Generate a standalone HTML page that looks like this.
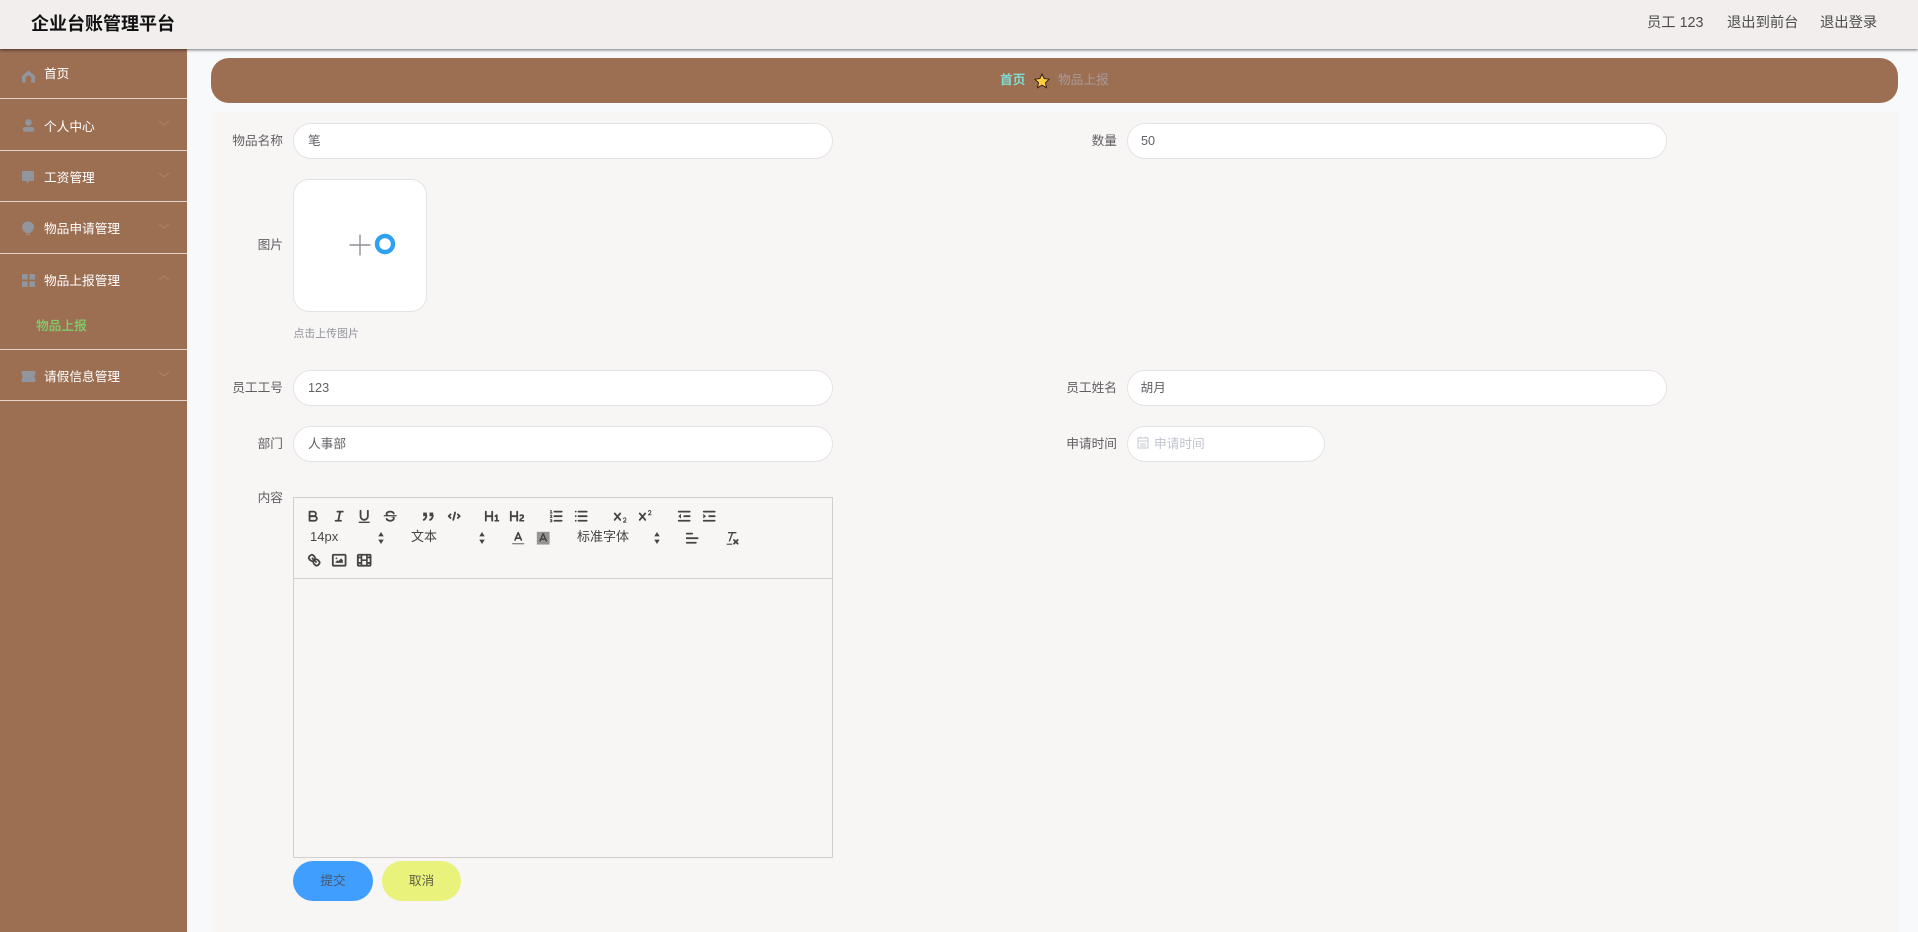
<!DOCTYPE html>
<html lang="zh-CN"><head><meta charset="utf-8"><title>企业台账管理平台</title>
<style>
*{box-sizing:border-box}
html{background:#f8f9fb}
html,body{margin:0;padding:0;width:1918px;height:932px;overflow:hidden;font-family:"Liberation Sans","Noto Sans CJK SC",sans-serif;color:#606266}
body{background:#f8f9fb;filter:blur(.3px)}
.a{position:absolute;white-space:nowrap}
#hd{left:0;top:0;width:1918px;height:49px;background:#f3eeee;box-shadow:0 1px 3px rgba(0,0,0,.55);z-index:3}
#sb{left:0;top:49px;width:187px;height:883px;background:#9c6f53}
.ln{position:absolute;left:0;width:187px;height:1px;background:#e4d3cd}
.mi{font-size:12.7px;line-height:18px;color:#fff;left:44px}
.ic{position:absolute;fill:#8f99a5;opacity:.92}
.ch{position:absolute;left:158px;fill:none;stroke:#fff;stroke-opacity:.14;stroke-width:1}
.lb{font-size:12.7px;line-height:18px;color:#5f5f62;text-align:right;width:70px}
.ip{background:#fff;border:1px solid #e3e2e5;border-radius:18px;height:36px;font-size:12.7px;line-height:34px;padding-left:14px;color:#606266}
.t svg{position:absolute;width:16.4px;height:16.4px;fill:none;stroke:#444;stroke-width:2;stroke-linecap:round;stroke-linejoin:round}
.t svg .f{fill:#444;stroke:none}
.t svg.ar{width:6px;height:12px;stroke:none}
.s{font-size:13px;line-height:16px;color:#444}
</style></head><body>
<div class="a" id="hd">
<div class="a" style="left:31px;top:12px;font-size:18px;line-height:24px;font-weight:700;color:#111">企业台账管理平台</div>
<div class="a" style="left:1647px;top:13px;font-size:14.3px;line-height:20px;color:#4c4c4c">员工 123</div>
<div class="a" style="left:1727px;top:13px;font-size:14.3px;line-height:20px;color:#4c4c4c">退出到前台</div>
<div class="a" style="left:1820px;top:13px;font-size:14.3px;line-height:20px;color:#4c4c4c">退出登录</div>
</div>

<div class="a" id="sb"></div>
<div class="ln" style="top:98px"></div><div class="ln" style="top:150px"></div><div class="ln" style="top:201px"></div><div class="ln" style="top:253px"></div><div class="ln" style="top:349px"></div><div class="ln" style="top:400px"></div>
<div class="a mi" style="top:65px">首页</div>
<div class="a mi" style="top:118px">个人中心</div>
<div class="a mi" style="top:169px">工资管理</div>
<div class="a mi" style="top:220px">物品申请管理</div>
<div class="a mi" style="top:272px">物品上报管理</div>
<div class="a mi" style="top:317px;left:36px;color:#7fd06a;font-weight:500">物品上报</div>
<div class="a mi" style="top:368px">请假信息管理</div>

<svg class="ic" style="left:22px;top:70px" width="13" height="13" viewBox="0 0 14 14"><path d="M7 0.5 L14 6.5 V13.5 H10 V9 A3 3 0 0 0 4 9 V13.5 H0 V6.5Z"/></svg>
<svg class="ic" style="left:22px;top:119px" width="13" height="13" viewBox="0 0 14 14"><circle cx="7" cy="3.8" r="3.6"/><rect x="1" y="8.6" width="12" height="5" rx="2.2"/></svg>
<svg class="ic" style="left:21px;top:170px" width="14" height="14" viewBox="0 0 14 14"><path d="M1 1 H13 V11 H8.5 L6.5 13.5 L5 11 H1Z"/></svg>
<svg class="ic" style="left:21px;top:221px" width="14" height="14" viewBox="0 0 14 14"><path d="M7 0.5 A5.6 5.6 0 0 1 10 11 V12 H4 V11 A5.6 5.6 0 0 1 7 0.5Z"/><rect x="5" y="12.7" width="4" height="1.2"/></svg>
<svg class="ic" style="left:22px;top:274px" width="13" height="13" viewBox="0 0 13 13"><rect x="0" y="0" width="5.6" height="5.6"/><rect x="7.4" y="0" width="5.6" height="5.6"/><rect x="0" y="7.4" width="5.6" height="5.6"/><rect x="7.4" y="7.4" width="5.6" height="5.6"/></svg>
<svg class="ic" style="left:21px;top:371px" width="15" height="11" viewBox="0 0 15 12"><path d="M0 0 H15 V3.500 L13.500 6 L15 8.500 V12 H0 V8.500 L1.500 6 L0 3.500Z"/></svg>

<svg class="ch" style="top:120px" width="12" height="6" viewBox="0 0 12 6"><path d="M1 1 L6 5 L11 1"/></svg>
<svg class="ch" style="top:172px" width="12" height="6" viewBox="0 0 12 6"><path d="M1 1 L6 5 L11 1"/></svg>
<svg class="ch" style="top:223px" width="12" height="6" viewBox="0 0 12 6"><path d="M1 1 L6 5 L11 1"/></svg>
<svg class="ch" style="top:275px" width="12" height="6" viewBox="0 0 12 6"><path d="M1 5 L6 1 L11 5"/></svg>
<svg class="ch" style="top:371px" width="12" height="6" viewBox="0 0 12 6"><path d="M1 1 L6 5 L11 1"/></svg>

<div class="a" style="left:211px;top:58px;width:1687px;height:45px;background:#9c6f53;border-radius:18px"></div>
<div class="a" style="left:1000px;top:71px;font-size:12.7px;line-height:18px;font-weight:700;color:#80dcd2">首页</div>
<svg class="a" style="left:1033.500px;top:72.500px" width="16" height="16" viewBox="0 0 24 24"><path d="M12 1.500 L15.200 8.400 L22.800 9.300 L17.200 14.500 L18.700 22 L12 18.200 L5.300 22 L6.800 14.500 L1.200 9.300 L8.800 8.400Z" fill="#ffd03c" stroke="#2e1c10" stroke-width="1.400"/></svg>
<div class="a" style="left:1058px;top:71px;font-size:12.7px;line-height:18px;color:#a69a9b">物品上报</div>

<div class="a" style="left:212px;top:112px;width:1686px;height:820px;background:#f8f5f5"></div>

<div class="a lb" style="left:213px;top:132px">物品名称</div>
<div class="a ip" style="left:293px;top:123px;width:540px">笔</div>
<div class="a lb" style="left:1047px;top:132px">数量</div>
<div class="a ip" style="left:1127px;top:123px;width:540px;padding-left:13px">50</div>

<div class="a lb" style="left:213px;top:236px">图片</div>
<div class="a" style="left:293px;top:179px;width:134px;height:133px;background:#fff;border:1px solid #e3e2e5;border-radius:16px"></div>
<svg class="a" style="left:349px;top:234px" width="22" height="22" viewBox="0 0 22 22"><path d="M0.500 11 H21.500 M11 0.500 V21.500" stroke="#8f9196" stroke-width="1.400" fill="none"/></svg>
<svg class="a" style="left:374px;top:233px" width="22" height="22" viewBox="0 0 22 22"><circle cx="11" cy="11" r="8" fill="none" stroke="#2ea2f0" stroke-width="4.400"/></svg>
<div class="a" style="left:293.500px;top:326px;font-size:10.9px;line-height:16px;color:#8f9399">点击上传图片</div>

<div class="a lb" style="left:213px;top:379px">员工工号</div>
<div class="a ip" style="left:293px;top:370px;width:540px">123</div>
<div class="a lb" style="left:1047px;top:379px">员工姓名</div>
<div class="a ip" style="left:1127px;top:370px;width:540px;padding-left:12.500px">胡月</div>

<div class="a lb" style="left:213px;top:435px">部门</div>
<div class="a ip" style="left:293px;top:426px;width:540px">人事部</div>
<div class="a lb" style="left:1047px;top:435px">申请时间</div>
<div class="a ip" style="left:1127px;top:426px;width:198px;color:#c0c4cc;padding-left:26px">申请时间</div>
<svg class="a" style="left:1137px;top:436px" width="12" height="13" viewBox="0 0 12 13"><path d="M1 2 H11 V12 H1Z M1 5 H11 M3 8 H9 M3 10 H9 M3.500 .5 V2 M8.500 .5 V2" fill="none" stroke="#c6c8cf" stroke-width="1"/></svg>

<div class="a lb" style="left:213px;top:489px">内容</div>
<div class="a" style="left:293px;top:497px;width:540px;height:361px;border:1px solid #d2cece"></div>
<div class="a" style="left:293px;top:578px;width:540px;height:1px;background:#d2cece"></div>

<div class="t">
<svg style="left:305px;top:508px" viewBox="0 0 18 18"><path d="M5,4H9.500A2.500,2.500,0,0,1,12,6.500v0A2.500,2.500,0,0,1,9.500,9H5A0,0,0,0,1,5,9V4A0,0,0,0,1,5,4Z"/><path d="M5,9h5.500A2.500,2.500,0,0,1,13,11.500v0A2.500,2.500,0,0,1,10.500,14H5a0,0,0,0,1,0,0V9A0,0,0,0,1,5,9Z"/></svg>
<svg style="left:331px;top:508px" viewBox="0 0 18 18"><path d="M7 4H13M5 14H11M8 14L10 4"/></svg>
<svg style="left:356px;top:508px" viewBox="0 0 18 18"><path d="M5,3V9a4.012,4.012,0,0,0,4,4H9a4.012,4.012,0,0,0,4-4V3"/><rect class="f" x="3" y="15" width="12" height="1.500" rx=".5"/></svg>
<svg style="left:382px;top:508px" viewBox="0 0 18 18"><path d="M15.500 8.500H2.500" stroke-width="1.300"/><path class="f" d="M9.007,8C6.542,7.791,6,7.519,6,6.500,6,5.792,7.283,5,9,5c1.571,0,2.765.679,2.969,1.309a1,1,0,0,0,1.900-.617C13.356,4.106,11.354,3,9,3,6.200,3,4,4.538,4,6.500a3.200,3.200,0,0,0,.5,1.843Z"/><path class="f" d="M8.984,10C11.457,10.208,12,10.479,12,11.500c0,.708-1.283,1.500-3,1.500-1.571,0-2.765-.679-2.969-1.309a1,1,0,1,0-1.900.617C4.644,13.894,6.646,15,9,15c2.800,0,5-1.538,5-3.500a3.200,3.200,0,0,0-.5-1.843Z"/></svg>
<svg style="left:420px;top:508px" viewBox="0 0 18 18"><rect class="f" x="3.500" y="5" width="4" height="4"/><rect class="f" x="10.500" y="5" width="4" height="4"/><path d="M7 8c0 4-3 5-3 5M14 8c0 4-3 5-3 5"/></svg>
<svg style="left:446px;top:508px" viewBox="0 0 18 18"><path d="M5 7L3 9L5 11M13 7L15 9L13 11M10 5L8 13"/></svg>
<svg style="left:484px;top:508px" viewBox="0 0 18 18"><path class="f" d="M10,4V14a1,1,0,0,1-2,0V10H3v4a1,1,0,0,1-2,0V4A1,1,0,0,1,3,4V8H8V4a1,1,0,0,1,2,0Zm6.068,9.209H14.990V7.599a.541.541,0,0,0-.605-.605h-.627a1.011,1.011,0,0,0-.748.297L11.645,8.566a.543.543,0,0,0-.022.858l.286.308a.539.539,0,0,0,.847.033l.099-.088a1.214,1.214,0,0,0,.242-.353h.022s-.011.309-.011.605V13.209H12.041a.541.541,0,0,0-.605.605v.44a.541.541,0,0,0,.605.605h4.027a.541.541,0,0,0,.605-.605v-.44A.541.541,0,0,0,16.068,13.209Z"/></svg>
<svg style="left:509px;top:508px" viewBox="0 0 18 18"><path class="f" d="M16.740,13.814v.44a.541.541,0,0,1-.605.605H11.855a.584.584,0,0,1-.649-.605V14.013c0-2.905,3.399-3.422,3.399-4.555a.777.777,0,0,0-.847-.781,1.177,1.177,0,0,0-.836.385c-.275.264-.561.374-.858.132l-.429-.341c-.308-.242-.385-.518-.154-.814a2.972,2.972,0,0,1,2.454-1.177,2.454,2.454,0,0,1,2.684,2.409c0,2.453-3.179,2.927-3.278,3.938h2.794A.541.541,0,0,1,16.740,13.814ZM9,3A1,1,0,0,0,8,4V8H3V4A1,1,0,0,0,1,4V14a1,1,0,0,0,2,0V10H8v4a1,1,0,0,0,2,0V4A1,1,0,0,0,9,3Z"/></svg>
<svg style="left:548px;top:508px" viewBox="0 0 18 18"><path d="M7 4H15M7 9H15M7 14H15"/><path stroke-width="1" d="M2.500 5.500H4.500M3.500 5.500V2.500L2.500 3M4.500 10.500h-2c0-.2 1.800-1 1.800-2.200A1 1 0 0 0 2.500 8.200M2.500 14.800a1 1 0 0 0 1.800-.1A.7.7 0 0 0 3.700 14a.7.7 0 0 0 .6-.7 1 1 0 0 0-1.800-.1"/></svg>
<svg style="left:573px;top:508px" viewBox="0 0 18 18"><path d="M6 4H15M6 9H15M6 14H15M3 4V4M3 9V9M3 14V14"/></svg>
<svg style="left:612px;top:508px" viewBox="0 0 18 18"><path class="f" d="M15.500,15H13.861a3.858,3.858,0,0,0,1.914-2.975,1.800,1.800,0,0,0-1.600-1.751A1.921,1.921,0,0,0,12.021,11.700a.5.5,0,1,0,.957.291h0a.914.914,0,0,1,1.053-.725,.81.81,0,0,1,.744.762c0,1.076-1.170,1.870-1.940,2.431A1.456,1.456,0,0,0,12,15.500a.5.5,0,0,0,.5.5h3A.5.5,0,0,0,15.500,15Z"/><path class="f" d="M9.650,5.241a1,1,0,0,0-1.409.108L6,7.964,3.759,5.349A1,1,0,0,0,2.192,6.592Q2.215,6.621,2.241,6.649L4.684,9.500,2.241,12.350A1,1,0,0,0,3.710,13.707q.026-.028.049-.057L6,11.036,8.241,13.650a1,1,0,1,0,1.567-1.243Q9.785,12.378,9.759,12.350L7.316,9.500,9.759,6.651A1,1,0,0,0,9.650,5.241Z"/></svg>
<svg style="left:637px;top:508px" viewBox="0 0 18 18"><path class="f" d="M15.500,7H13.861a4.015,4.015,0,0,0,1.914-2.975,1.800,1.800,0,0,0-1.600-1.751A1.922,1.922,0,0,0,12.021,3.700a.5.5,0,1,0,.957.291,.917.917,0,0,1,1.053-.725,.81.81,0,0,1,.744.762c0,1.077-1.164,1.925-1.934,2.486A1.423,1.423,0,0,0,12,7.500a.5.5,0,0,0,.5.5h3A.5.5,0,0,0,15.500,7Z"/><path class="f" d="M9.650,5.241a1,1,0,0,0-1.409.108L6,7.964,3.759,5.349A1,1,0,0,0,2.192,6.592Q2.215,6.621,2.241,6.649L4.684,9.500,2.241,12.350A1,1,0,0,0,3.710,13.707q.026-.028.049-.057L6,11.036,8.241,13.650a1,1,0,1,0,1.567-1.243Q9.785,12.378,9.759,12.350L7.316,9.500,9.759,6.651A1,1,0,0,0,9.650,5.241Z"/></svg>
<svg style="left:676px;top:508px" viewBox="0 0 18 18"><path d="M3 14H15M3 4H15M9 9H15"/><path class="f" d="M5.500 6.500V11.500L2.500 9Z"/></svg>
<svg style="left:701px;top:508px" viewBox="0 0 18 18"><path d="M3 14H15M3 4H15M9 9H15"/><path class="f" d="M2.500 6.500V11.500L5.500 9Z"/></svg>

<div class="a s" style="left:310px;top:529px">14px</div>
<svg class="ar" style="left:378px;top:532px" viewBox="0 0 5 11"><path d="M2.500 0L5 4H0Z M2.500 11L5 7H0Z" fill="#444"/></svg>
<div class="a s" style="left:411px;top:529px">文本</div>
<svg class="ar" style="left:479px;top:532px" viewBox="0 0 5 11"><path d="M2.500 0L5 4H0Z M2.500 11L5 7H0Z" fill="#444"/></svg>
<svg style="left:510px;top:530px" viewBox="0 0 18 18"><path stroke-width="1.800" d="M5.500 11L9 3L12.500 11M11.600 9H6.400"/><path stroke="#888" stroke-width="1.500" d="M3 15H15"/></svg>
<svg style="left:535px;top:530px" viewBox="0 0 18 18"><defs><pattern id="p" width="2" height="2" patternUnits="userSpaceOnUse"><rect width="2" height="2" fill="#b5b1b1" stroke="none"/><rect width="1" height="1" fill="#777" stroke="none"/><rect x="1" y="1" width="1" height="1" fill="#777" stroke="none"/></pattern></defs><rect x="2" y="2" width="14" height="14" fill="url(#p)" stroke="none" style="stroke:none;fill:url(#p)"/><path stroke-width="1.600" d="M5.500 12L9 4L12.500 12M11.600 10H6.400"/></svg>
<div class="a s" style="left:577px;top:529px">标准字体</div>
<svg class="ar" style="left:654px;top:532px" viewBox="0 0 5 11"><path d="M2.500 0L5 4H0Z M2.500 11L5 7H0Z" fill="#444"/></svg>
<svg style="left:684px;top:530px" viewBox="0 0 18 18"><path d="M3 9H15M3 14H13M3 4H9"/></svg>
<svg style="left:724px;top:530px" viewBox="0 0 18 18"><path stroke-width="1.500" d="M5 3H13M6 12L9.350 3"/><path d="M11 11L15 15M15 11L11 15"/><rect class="f" x="3" y="15" width="6" height="1.200"/></svg>

<svg style="left:306px;top:552px" viewBox="0 0 18 18"><path d="M7 7L11 11M8.900,4.577a3.476,3.476,0,0,1,.36,4.679A3.476,3.476,0,0,1,4.577,8.900C3.185,7.500,2.035,6.400,4.217,4.217S7.500,3.185,8.900,4.577ZM13.423,9.100a3.476,3.476,0,0,0-4.679-.36,3.476,3.476,0,0,0,.36,4.679c1.392,1.392,2.500,2.542,4.679.36S14.815,10.500,13.423,9.100Z"/></svg>
<svg style="left:331px;top:552px" viewBox="0 0 18 18"><rect x="2" y="3" width="14" height="12" rx="1"/><circle class="f" cx="6" cy="7" r="1"/><path class="f" d="M5 12V11L7 9L8 10L11 7L13 9V12Z"/></svg>
<svg style="left:356px;top:552px" viewBox="0 0 18 18"><rect x="2" y="3" width="14" height="12" rx="1"/><path d="M6 3V15M12 3V15M6 9H12" stroke-width="1.800"/><path class="f" d="M2 5H6V7H2ZM12 5H16V7H12ZM2 11H6V13H2ZM12 11H16V13H12Z"/></svg>
</div>

<div class="a" style="left:293px;top:861px;width:80px;height:40px;background:#409eff;border-radius:20px;font-size:12.7px;line-height:40px;text-align:center;color:#43576e">提交</div>
<div class="a" style="left:382px;top:861px;width:79px;height:40px;background:#e9f27a;border-radius:20px;font-size:12.7px;line-height:40px;text-align:center;color:#5f6247">取消</div>
</body></html>
